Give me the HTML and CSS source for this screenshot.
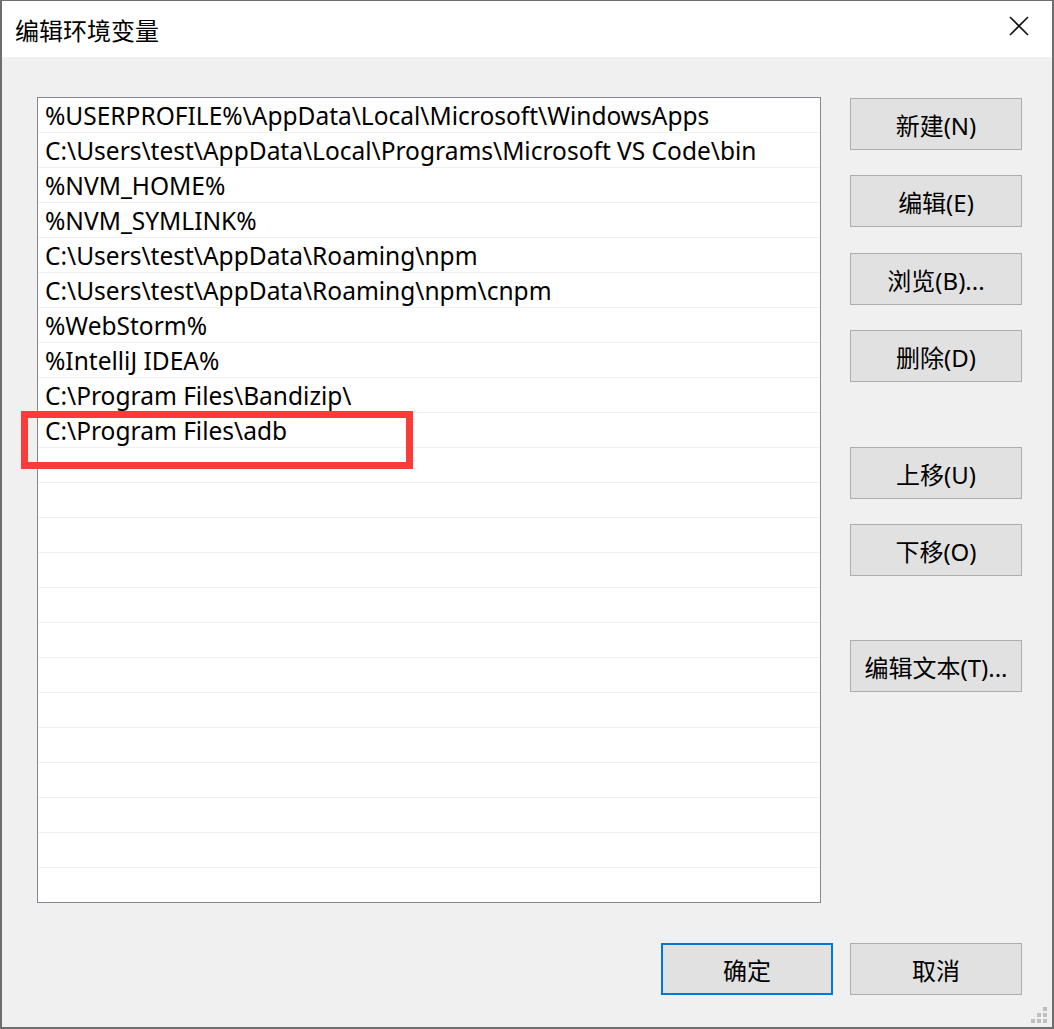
FILE: index.html
```html
<!DOCTYPE html>
<html lang="zh-CN">
<head>
<meta charset="utf-8">
<title>编辑环境变量</title>
<link rel="stylesheet" href="styles.css">
</head>
<body>
<div class="window">
  <div class="titlebar">
    <span class="title">编辑环境变量</span>
    <svg class="close" width="20" height="20" viewBox="0 0 20 20"><path d="M1 1 L19 19 M19 1 L1 19" stroke="#111" stroke-width="1.6" fill="none"/></svg>
  </div>
  <div class="content">
    <div class="main">
      <div class="list">
        <div class="row">%USERPROFILE%\AppData\Local\Microsoft\WindowsApps</div>
        <div class="row">C:\Users\test\AppData\Local\Programs\Microsoft VS Code\bin</div>
        <div class="row">%NVM_HOME%</div>
        <div class="row">%NVM_SYMLINK%</div>
        <div class="row">C:\Users\test\AppData\Roaming\npm</div>
        <div class="row">C:\Users\test\AppData\Roaming\npm\cnpm</div>
        <div class="row">%WebStorm%</div>
        <div class="row">%IntelliJ IDEA%</div>
        <div class="row">C:\Program Files\Bandizip\</div>
        <div class="row">C:\Program Files\adb</div>
        <div class="row"></div><div class="row"></div><div class="row"></div>
        <div class="row"></div><div class="row"></div><div class="row"></div>
        <div class="row"></div><div class="row"></div><div class="row"></div>
        <div class="row"></div><div class="row"></div><div class="row"></div>
        <div class="row"></div>
      </div>
      <div class="side">
        <button class="btn b-new">新建(N)</button>
        <button class="btn b-edit">编辑(E)</button>
        <button class="btn b-browse">浏览(B)...</button>
        <button class="btn b-del">删除(D)</button>
        <button class="btn b-up">上移(U)</button>
        <button class="btn b-down">下移(O)</button>
        <button class="btn b-text">编辑文本(T)...</button>
      </div>
    </div>
    <div class="footer">
      <button class="btn default">确定</button>
      <button class="btn">取消</button>
    </div>
  </div>
  <div class="highlight"></div>
  <svg class="grip" width="16" height="16" viewBox="0 0 16 16">
    <rect x="12" y="0" width="4" height="4" fill="#bfbfbf"/>
    <rect x="6" y="6" width="4" height="4" fill="#bfbfbf"/>
    <rect x="12" y="6" width="4" height="4" fill="#bfbfbf"/>
    <rect x="0" y="12" width="4" height="4" fill="#bfbfbf"/>
    <rect x="6" y="12" width="4" height="4" fill="#bfbfbf"/>
    <rect x="12" y="12" width="4" height="4" fill="#bfbfbf"/>
  </svg>
</div>
</body>
</html>
```

FILE: styles.css
```css
html, body {
  margin: 0;
  padding: 0;
  background: #f0f0f0;
}
body {
  font-family: "Noto Sans", "Noto Sans CJK SC", sans-serif;
  color: #000;
}
.window {
  position: relative;
  width: 1054px;
  height: 1029px;
  box-sizing: border-box;
  border-style: solid;
  border-color: #6e6e6e;
  border-width: 1px 2px 2px 2px;
  background: #f0f0f0;
  display: flex;
  flex-direction: column;
  overflow: hidden;
}
.titlebar {
  height: 56px;
  flex: none;
  background: #fff;
  display: flex;
  align-items: center;
  justify-content: space-between;
  padding: 0 23px 0 13px;
}
.title {
  font-family: "Noto Sans CJK SC", sans-serif;
  font-size: 24px;
  line-height: 1;
  margin-top: 1px;
}
.close {
  display: block;
  margin-top: -6px;
}
.content {
  flex: 1;
  display: flex;
  flex-direction: column;
  padding: 40px 30px 0 35px;
}
.main {
  display: flex;
  gap: 29px;
}
.list {
  width: 784px;
  height: 806px;
  box-sizing: border-box;
  border: 1px solid #828790;
  background: #fff;
  overflow: hidden;
}
.row {
  height: 35px;
  box-sizing: border-box;
  border-bottom: 1px solid #f0f0f0;
  padding-left: 7px;
  padding-top: 2px;
  font-size: 24.5px;
  line-height: 32px;
  white-space: nowrap;
}
.side {
  display: flex;
  flex-direction: column;
  padding-top: 1px;
}
.btn {
  width: 172px;
  height: 52px;
  box-sizing: border-box;
  border: 1px solid #adadad;
  background: #e1e1e1;
  font-family: "Noto Sans", "Noto Sans CJK SC", sans-serif;
  font-size: 24px;
  color: #000;
  padding: 0;
  margin: 0;
  flex: none;
}
.b-edit, .b-down { margin-top: 25px; }
.b-browse { margin-top: 26px; }
.b-del { margin-top: 25px; }
.b-up { margin-top: 65px; }
.b-text { margin-top: 64px; }
.footer {
  display: flex;
  justify-content: flex-end;
  gap: 17px;
  margin-top: 40px;
}
.btn.default {
  border: 2px solid #0078d7;
}
.highlight {
  position: absolute;
  left: 19px;
  top: 410px;
  width: 392px;
  height: 58px;
  box-sizing: border-box;
  border: 7px solid #fb3a3a;
}
.grip {
  position: absolute;
  right: 5px;
  bottom: 4px;
}
```
